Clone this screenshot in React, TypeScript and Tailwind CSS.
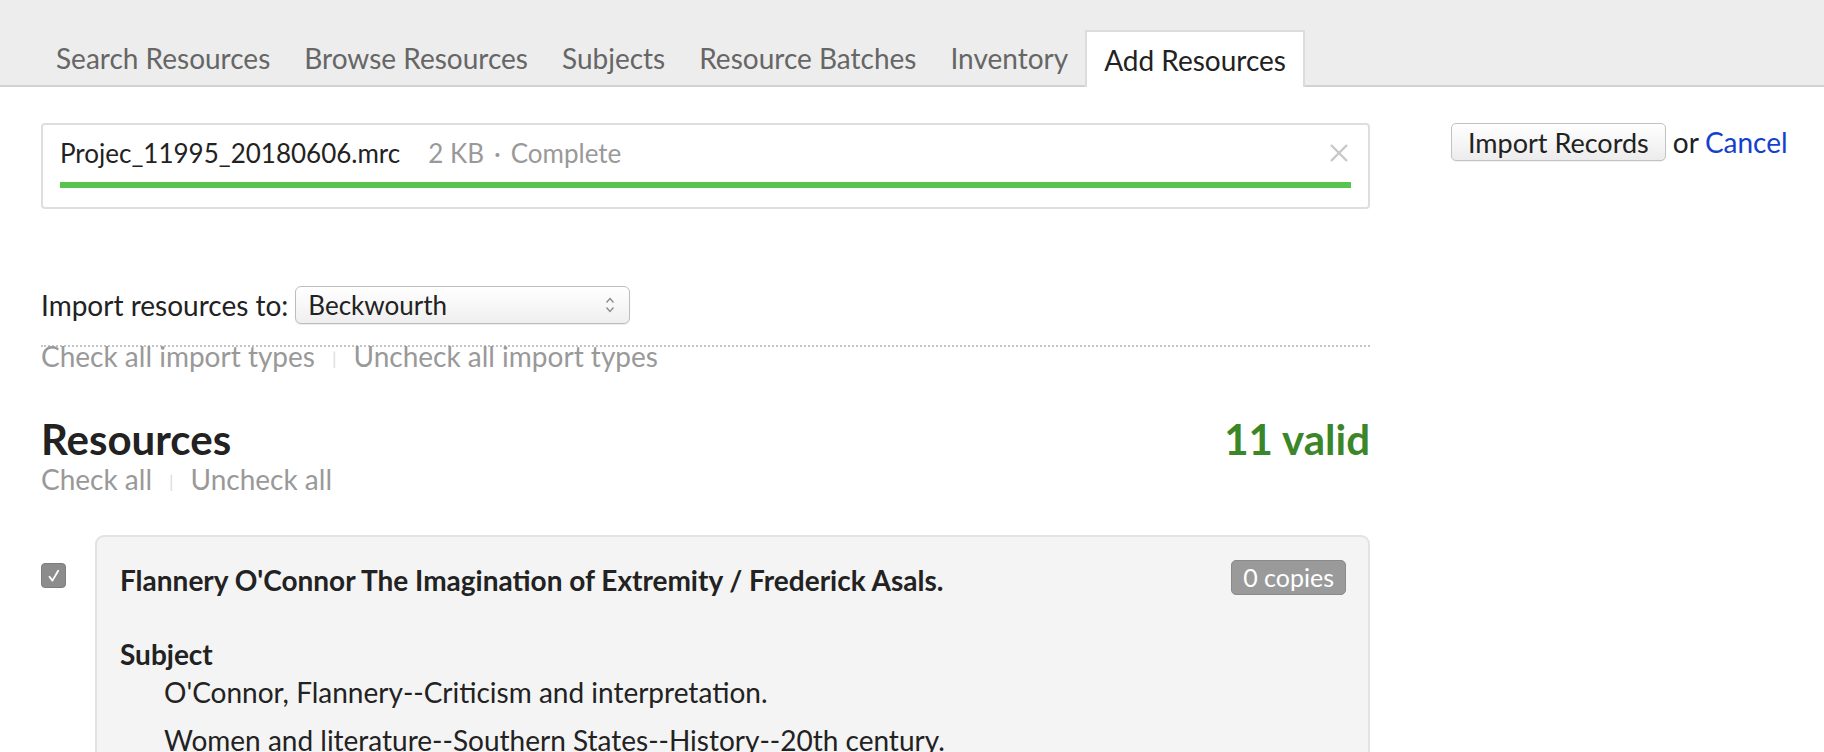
import React from "react";

const tabs = ["Search Resources", "Browse Resources", "Subjects", "Resource Batches", "Inventory"];

function CheckBox() {
  return (
    <div className="w-[25px] h-[25px] rounded-[4px] bg-[#8c8c8c] border border-[#7d7d7d] flex items-center justify-center">
      <svg width="18" height="18" viewBox="0 0 18 18" fill="none">
        <path d="M4.5 9.8 L7.4 13.6 L13.2 3.8" stroke="white" strokeWidth="1.8" strokeLinecap="round" strokeLinejoin="round" />
      </svg>
    </div>
  );
}

export default function App() {
  return (
    <div className="w-[1824px] h-[752px] overflow-hidden bg-white font-['Lato',sans-serif] text-[#222]">
      {/* Tab bar */}
      <div className="h-[87px] bg-[#ededed] border-b-2 border-[#d2d2d2] flex items-end pl-[39px]">
        {tabs.map((t) => (
          <div key={t} className="h-[55px] px-[17px] flex items-center text-[28px] text-[#666] leading-none">
            {t}
          </div>
        ))}
        <div className="h-[57px] -mb-[2px] px-[17px] flex items-center bg-white border-2 border-b-0 border-[#dcdcdc] text-[28px] text-[#222] leading-none">
          Add Resources
        </div>
      </div>

      <div className="flex pl-[41px] pt-[36px]">
        {/* Main column */}
        <div className="w-[1329px] shrink-0">
          <div className="h-[86px] border-2 border-[#dedede] rounded-[4px] px-[17px] pt-[12px]">
            <div className="flex items-center h-[32px] text-[26px] leading-none">
              <span className="text-[#222]">Projec_11995_20180606.mrc</span>
              <span className="ml-[28px] text-[#999]">2 KB</span>
              <span className="mx-[10px] text-[#999]">·</span>
              <span className="text-[#999]">Complete</span>
              <svg className="ml-auto mr-[2px]" width="20" height="20" viewBox="0 0 20 20" fill="none">
                <path d="M2 2 L18 18 M18 2 L2 18" stroke="#c8c8c8" strokeWidth="2.4" />
              </svg>
            </div>
            <div className="mt-[13px] h-[6px] bg-[#58c34d]" />
          </div>

          <div className="mt-[75px] flex items-center">
            <span className="text-[28px]">Import resources to:</span>
            <div className="ml-[7px] w-[335px] h-[38px] rounded-[6px] border border-[#bdbdbd] bg-gradient-to-b from-white to-[#efefef] flex items-center pl-[12px] pr-[14px] shadow-[0_1px_1px_rgba(0,0,0,0.08)]">
              <span className="text-[26px] leading-none">Beckwourth</span>
              <svg className="ml-auto" width="10" height="18" viewBox="0 0 10 18" fill="none">
                <path d="M1.5 6.5 L5 2.5 L8.5 6.5" stroke="#888" strokeWidth="1.3" />
                <path d="M1.5 11.5 L5 15.5 L8.5 11.5" stroke="#888" strokeWidth="1.3" />
              </svg>
            </div>
          </div>

          <div className="mt-[19px] border-t-2 border-dotted border-[#c4c4c4]" />
          <div className="-mt-[8px] flex items-center text-[28px] text-[#999] leading-[30px]">
            <span>Check all import types</span>
            <span className="mx-[17px] mt-[4px] text-[#ddd] text-[18px]">|</span>
            <span>Uncheck all import types</span>
          </div>

          <div className="mt-[41px] flex items-end justify-between">
            <h2 className="text-[42px] font-bold leading-[50px] text-[#222]">Resources</h2>
            <span className="text-[42px] font-bold leading-[50px] text-[#3a8628]">11 valid</span>
          </div>
          <div className="-mt-[2px] flex items-center text-[28px] text-[#999] leading-[30px]">
            <span>Check all</span>
            <span className="mx-[17px] mt-[4px] text-[#ddd] text-[18px]">|</span>
            <span>Uncheck all</span>
          </div>

          <div className="mt-[39px] flex">
            <div className="pt-[28px] w-[54px] shrink-0">
              <CheckBox />
            </div>
            <div className="flex-1 bg-[#f4f4f4] border-2 border-[#e3e3e3] rounded-[9px] px-[23px] pt-[24px] pb-[40px]">
              <div className="flex items-start justify-between">
                <div className="text-[28px] font-bold leading-[38px]">
                  Flannery O'Connor The Imagination of Extremity / Frederick Asals.
                </div>
                <span className="-mt-[1px] mr-[-1px] px-[11px] h-[35px] flex items-center rounded-[5px] bg-[#9a9a9a] border border-[#8a8a8a] text-white text-[25px]">
                  0 copies
                </span>
              </div>
              <div className="mt-[37px] text-[28px] font-bold leading-[36px]">Subject</div>
              <div className="pl-[44px] text-[28px] leading-[36px]">
                <div className="mt-[2px]">O'Connor, Flannery--Criticism and interpretation.</div>
                <div className="mt-[12px]">Women and literature--Southern States--History--20th century.</div>
              </div>
            </div>
          </div>
        </div>

        {/* Sidebar */}
        <div className="ml-[81px] flex items-center h-[38px]">
          <button className="h-[38px] px-[16px] rounded-[5px] border border-[#c2c2c2] bg-gradient-to-b from-white to-[#ececec] text-[27px] text-[#222] leading-none shadow-[0_1px_1px_rgba(0,0,0,0.06)]">
            Import Records
          </button>
          <span className="ml-[7px] text-[28px] text-[#222]">or</span>
          <span className="ml-[6px] text-[28px] text-[#1441cc]">Cancel</span>
        </div>
      </div>
    </div>
  );
}
